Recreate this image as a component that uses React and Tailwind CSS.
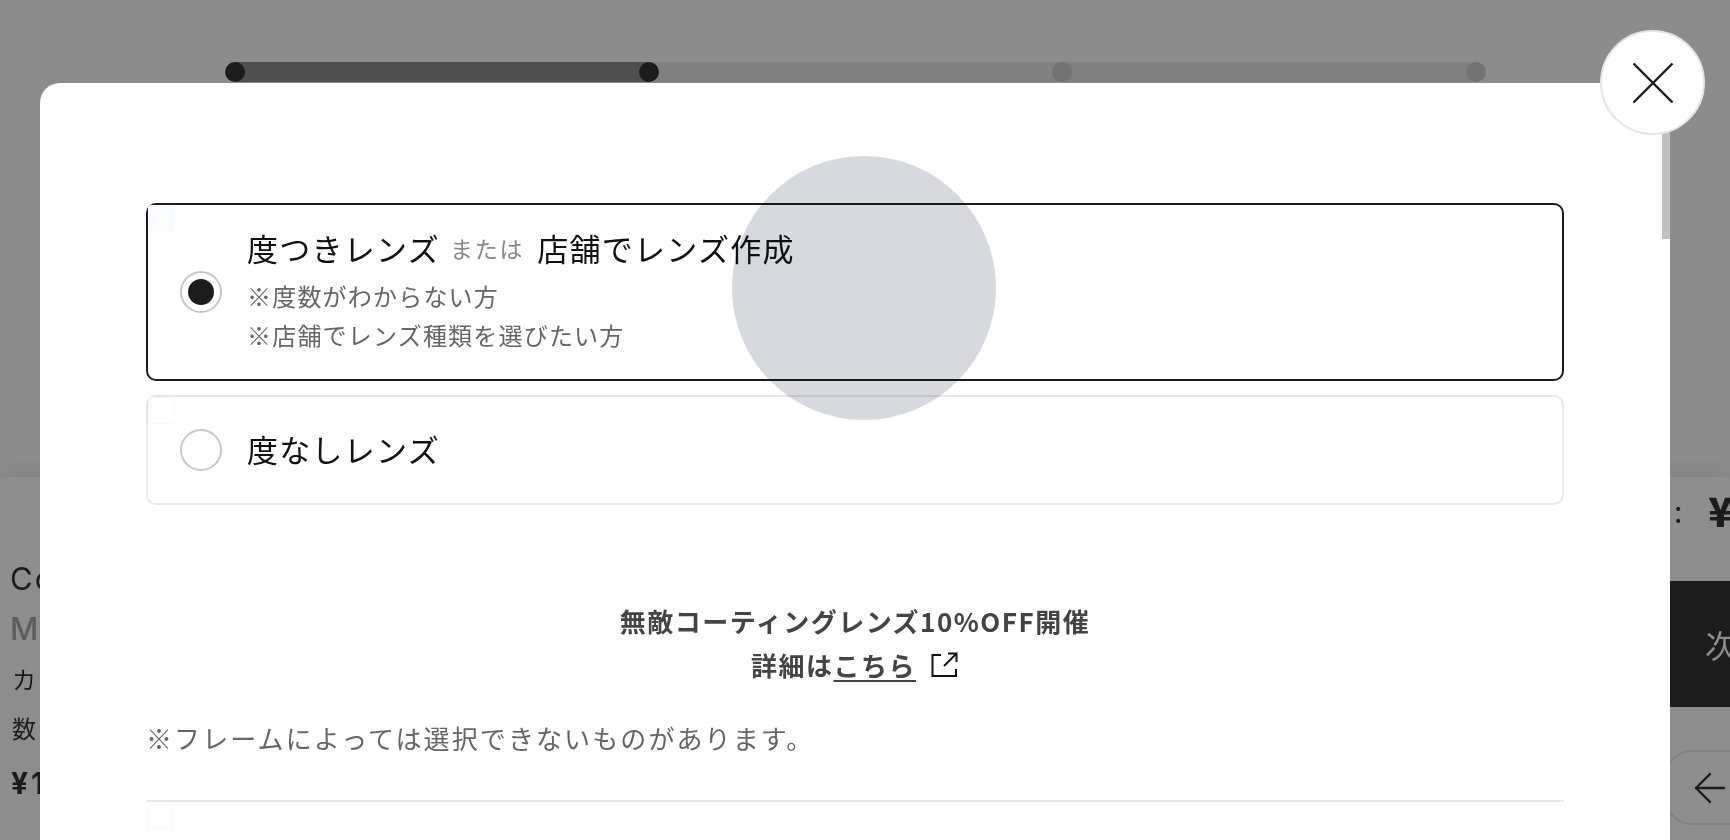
import React from 'react';
import { ArrowLeft } from 'lucide-react';

const jp = 'font-["Noto_Sans_CJK_JP","Noto_Sans",sans-serif]';

function Radio({ checked }) {
  return (
    <span className="flex h-[42px] w-[42px] shrink-0 items-center justify-center rounded-full border-2 border-[#c8c8c8] bg-white">
      {checked && <span className="h-[26px] w-[26px] rounded-full bg-[#1c1c1c]" />}
    </span>
  );
}

function Stepper() {
  return (
    <div className="ml-[225px] flex h-[20px] w-[1261px] items-center">
      <span className="relative z-10 h-5 w-5 rounded-full bg-[#1c1c1c]" />
      <span className="-mx-[10px] h-5 flex-1 bg-[#4f4f4f]" />
      <span className="relative z-10 h-5 w-5 rounded-full bg-[#1c1c1c]" />
      <span className="-mx-[10px] h-5 flex-1 bg-[#808080]" />
      <span className="relative z-10 h-5 w-5 rounded-full bg-[#727272]" />
      <span className="-mx-[10px] h-5 flex-1 bg-[#808080]" />
      <span className="relative z-10 h-5 w-5 rounded-full bg-[#727272]" />
    </div>
  );
}

function BottomBar() {
  return (
    <div className="mt-[395px] flex h-[363px] justify-between bg-[#8d8d8d] shadow-[0_-10px_14px_rgba(0,0,0,0.05)]">
      <div className="flex w-[60px] flex-col overflow-hidden pl-[10px] pt-[87px] text-[#1c1c1c]">
        <p className="h-[30px] whitespace-nowrap font-['Inter',sans-serif] text-[31px] leading-[30px] tracking-[2px]">Co</p>
        <p className="mt-[20px] h-[30px] whitespace-nowrap font-['Inter',sans-serif] text-[31px] font-medium leading-[30px] text-[#5c5c5c]">M</p>
        <p className="mt-[20px] h-[30px] whitespace-nowrap pl-[2px] text-[24px] leading-[30px]">カ</p>
        <p className="mt-[19px] h-[30px] whitespace-nowrap pl-[2px] text-[24px] leading-[30px]">数</p>
        <p className="mt-[25px] h-[30px] whitespace-nowrap pl-[1px] font-['Inter',sans-serif] text-[30px] font-bold leading-[30px] tracking-[3px]">¥1</p>
      </div>
      <div className="flex w-[80px] flex-col">
        <div className="mt-[13px] flex h-[40px] items-center pl-[24px] text-[#1c1c1c]">
          <span className="text-[30px] leading-[40px]">:</span>
          <span className="ml-[26px] text-[40px] font-black leading-[40px]">¥</span>
        </div>
        <div className="mt-[51px] flex h-[126px] items-center bg-[#1c1c1c] pl-[55px] text-[32px] text-[#8d8d8d]">次</div>
        <div className="ml-[13px] mt-[43px] flex h-[75px] w-[90px] items-center rounded-l-[30px] border-2 border-[#808080] pl-[21px]">
          <ArrowLeft className="h-[48px] w-[48px] shrink-0 text-[#1c1c1c]" strokeWidth={1.2} />
        </div>
      </div>
    </div>
  );
}

function App() {
  return (
    <div className={`relative h-[840px] w-[1730px] overflow-hidden bg-[#8c8c8c] ${jp}`}>
      <div className="pt-[62px]">
        <Stepper />
        <BottomBar />
      </div>

      {/* modal */}
      <div className="absolute bottom-0 left-[40px] top-[83px] w-[1630px] overflow-hidden rounded-t-[20px] bg-white pl-[106px] pr-[106px] pt-[120px]">
        <div className="absolute right-0 top-0 h-[156px] w-2 bg-[#c1c1c1]" />

        <div className="relative flex h-[178px] items-center gap-[25px] rounded-[10px] border-2 border-[#1c1c1c] pl-[32px]">
          <span className="absolute left-0 top-0 flex h-[27px] w-[27px] items-center justify-center rounded-[3px] bg-[#fafbfe]">
            <svg width="16" height="14" viewBox="0 0 16 14" fill="none" stroke="#ffffff" strokeWidth="3">
              <path d="M2 7L6 11L14 2" />
            </svg>
          </span>
          <Radio checked />
          <div className="relative">
            <p className="-mt-[3px] flex h-[41px] items-center text-[31px] leading-[40px] tracking-[1.25px] text-[#111111]">
              <span>度つきレンズ</span>
              <span className="ml-[10px] text-[23px] tracking-[1.8px] text-[#888888]">または</span>
              <span className="ml-[13px]">店舗でレンズ作成</span>
            </p>
            <p className="mt-[7px] text-[24px] leading-[39px] tracking-[1.2px] text-[#666666]">※度数がわからない方</p>
            <p className="text-[24px] leading-[39px] tracking-[1.2px] text-[#666666]">※店舗でレンズ種類を選びたい方</p>
          </div>
        </div>

        <div className="relative mt-[14px] flex h-[110px] items-center gap-[25px] rounded-[10px] border-2 border-[#e8e8e8] pl-[32px]">
          <span className="absolute left-0 top-0 h-[27px] w-[27px] rounded-[3px] border border-[#f8f8f8]" />
          <Radio />
          <p className="relative -mt-[2px] text-[31px] leading-[40px] tracking-[1.25px] text-[#111111]">度なしレンズ</p>
        </div>

        <div className="mt-[93px] text-center text-[26px] font-bold leading-[46px] tracking-[1.5px] text-[#444444]">
          <p>無敵コーティングレンズ10%OFF開催</p>
          <p className="-mt-[2px] flex items-center justify-center">
            <span>詳細は</span>
            <span className="underline underline-offset-4">こちら</span>
            <svg className="ml-[15px]" width="28" height="26" viewBox="0 0 28 26" fill="none" stroke="#111111" strokeWidth="2">
              <path d="M10 3H1.5V24H25V17" />
              <path d="M13 14L25 2" />
              <path d="M17 1.5H25.5V10" />
            </svg>
          </p>
        </div>

        <p className="mt-[30px] text-[26px] leading-[40px] tracking-[2.1px] text-[#666666]">※フレームによっては選択できないものがあります。</p>

        <div className="mt-[42px] h-[2px] bg-[#e8e8e8]" />
        <div className="ml-[1px] mt-[2px] h-[25px] w-[26px] rounded-[3px] border border-[#f8f8f8]" />
      </div>

      {/* press ripple */}
      <div className="absolute left-[732px] top-[156px] h-[264px] w-[264px] rounded-full bg-[#d8d9de] mix-blend-multiply" />

      <button className="absolute left-[1600px] top-[30px] flex h-[105px] w-[105px] items-center justify-center rounded-full border-2 border-[#e5e5e5] bg-white">
        <svg width="42" height="42" viewBox="0 0 42 42" fill="none" stroke="#1c1c1c" strokeWidth="2.4">
          <path d="M1.5 1.5L40.5 40.5" />
          <path d="M40.5 1.5L1.5 40.5" />
        </svg>
      </button>
    </div>
  );
}

export default App;
